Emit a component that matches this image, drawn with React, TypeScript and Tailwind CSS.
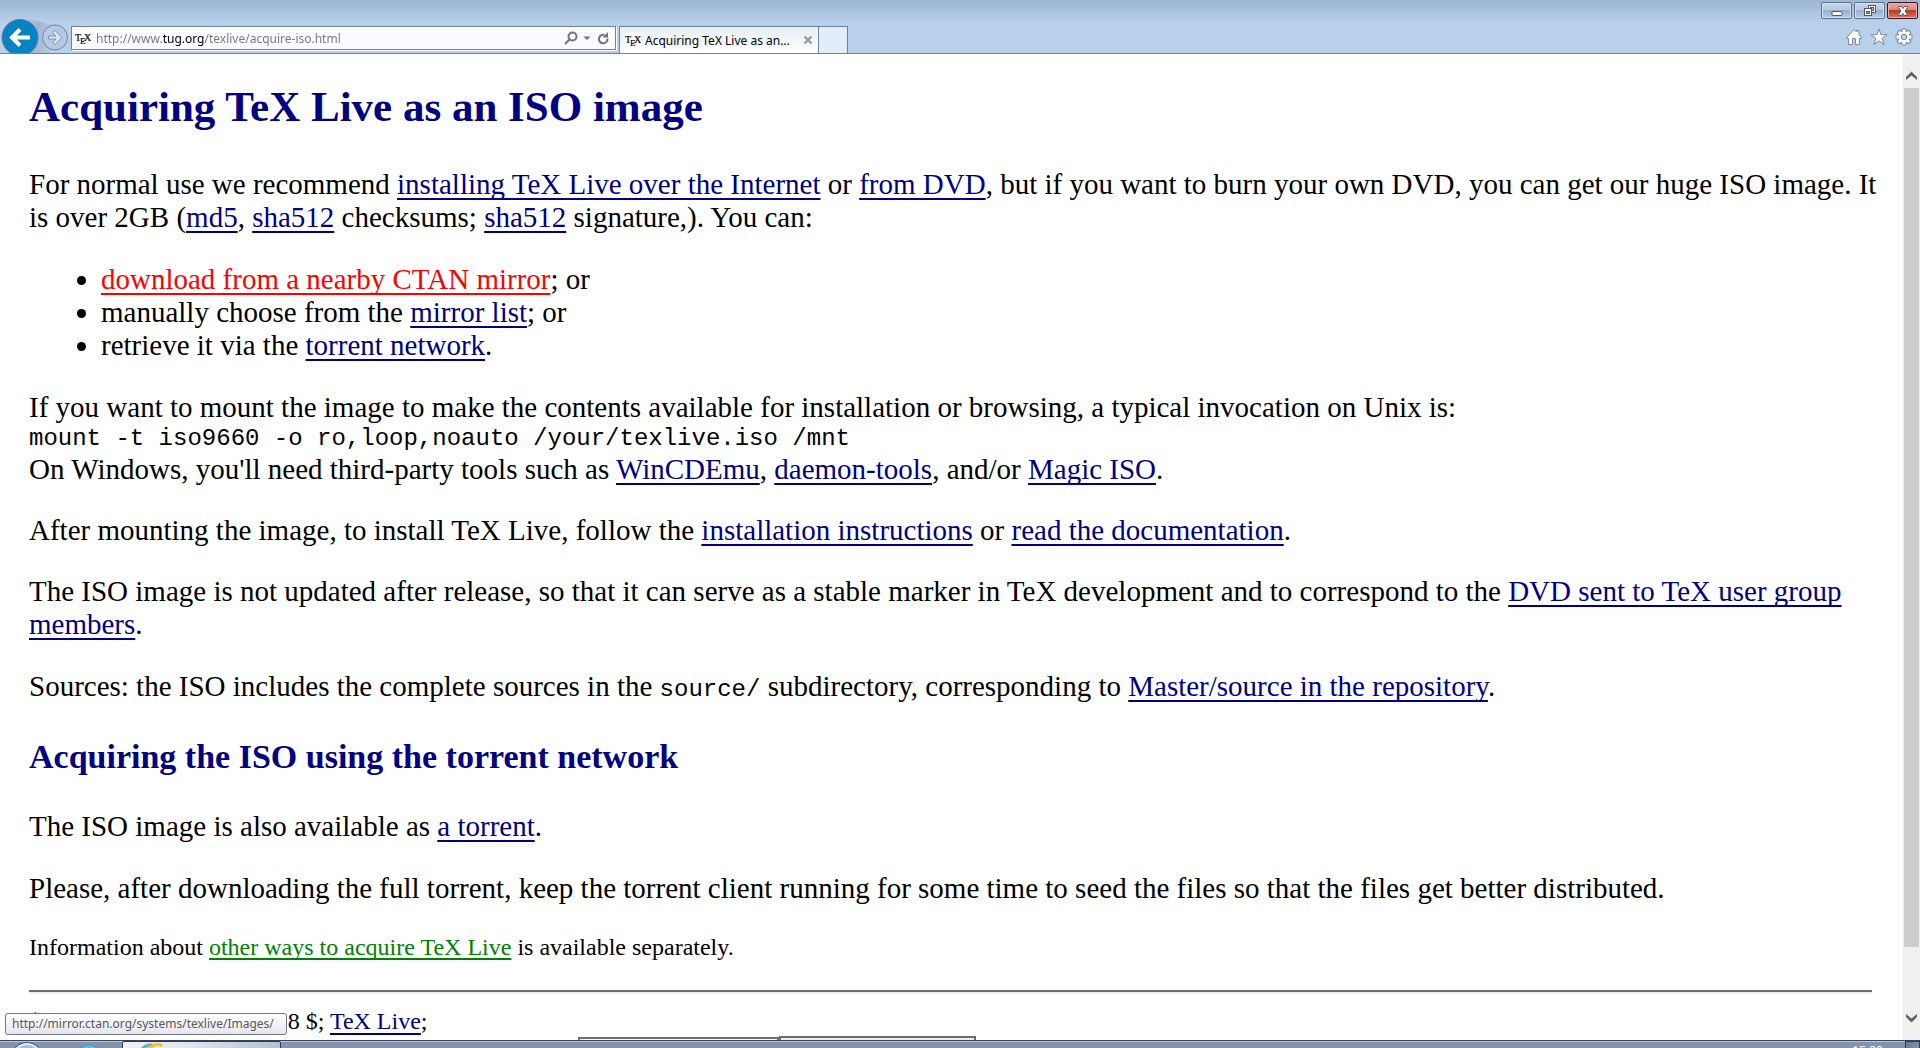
import type { ReactNode } from "react";

const link = "text-[#000080] underline decoration-2 underline-offset-[4px] [text-decoration-skip-ink:none]";

function Link({ href, children }: { href: string; children: ReactNode }) {
  return <a href={href} className={link}>{children}</a>;
}

function TexIcon() {
  return (
    <svg width="16" height="16" viewBox="0 0 16 16" className="shrink-0 bg-white" aria-hidden="true">
      <g fontFamily="Liberation Serif, serif" fontSize="10" fill="#000" stroke="#000" strokeWidth="0.2">
        <text x="0" y="11">T</text>
        <text x="5" y="14" fontSize="9">E</text>
        <text x="9" y="11">X</text>
      </g>
    </svg>
  );
}

function NavButtons() {
  return (
    <div className="flex h-[34px] w-[71px] shrink-0 gap-[3px] overflow-hidden bg-[linear-gradient(100deg,transparent_30%,#9fb4cf_50%,#b9d0ea_75%)] pl-[1px] [clip-path:polygon(0_0,30px_0,48px_5px,71px_5px,71px_100%,0_100%)]">
      <button type="button" aria-label="Back" className="h-[38px] w-[38px] shrink-0">
        <svg width="38" height="38" viewBox="0 0 38 38">
          <circle cx="19" cy="18.5" r="18" fill="#0284c5" stroke="#68788c" />
          <path d="M10 18.5H29M19 10.5L11 18.5L19 26.500" fill="none" stroke="#fff" strokeWidth="4" />
        </svg>
      </button>
      <button type="button" aria-label="Forward" className="h-[38px] w-[26px] shrink-0">
        <svg width="26" height="38" viewBox="0 0 26 38">
          <circle cx="13" cy="18.500" r="12.500" fill="#b4cae4" stroke="#71839a" />
          <path d="M6.500 17H14L10.500 13.500L13 11.500L20 18.500L13 25.500L10.500 23.500L14 20H6.500Z" fill="#d9e5f3" stroke="#8092a8" />
        </svg>
      </button>
    </div>
  );
}

function CaptionButtons() {
  const plain = "grid h-[17px] w-[31px] place-items-center rounded-[2px] border border-[#5d7088] bg-[linear-gradient(#c3d5e9_0%,#b5cae1_48%,#96b0cb_50%,#b5cde6_100%)] shadow-[inset_0_0_0_1px_#d2e1f1]";
  return (
    <div className="flex gap-[2px]">
      <button type="button" aria-label="Minimize" className={plain}>
        <svg width="12" height="12" viewBox="0 0 12 12"><rect x="1" y="6.500" width="10" height="4" rx="0.500" fill="#fff" stroke="#535666" /></svg>
      </button>
      <button type="button" aria-label="Restore" className={plain}>
        <svg width="13" height="12" viewBox="0 0 13 12">
          <g fill="none" stroke="#535666">
            <rect x="5.500" y="0.500" width="7" height="7" fill="#fff" /><rect x="7.500" y="2.500" width="3" height="3" fill="#a9bfd8" />
            <rect x="1.500" y="3.500" width="7" height="7" fill="#fff" /><rect x="3.500" y="6.500" width="3" height="2" fill="#a9bfd8" />
          </g>
        </svg>
      </button>
      <button type="button" aria-label="Close" className="grid h-[17px] w-[31px] place-items-center rounded-[2px] border border-[#43121c] bg-[linear-gradient(#e8a99d_0%,#d98a7b_46%,#b83a22_50%,#d57a66_100%)] shadow-[inset_0_0_0_1px_#e9b1a6]">
        <svg width="12" height="10" viewBox="0 0 12 10"><path d="M1.500 0.500H4.500L6 2.500L7.500 0.500H10.500V1.500L8 5L10.500 8.500V9.500H7.500L6 7.500L4.500 9.500H1.500V8.500L4 5L1.500 1.500Z" fill="#fff" stroke="#535666" /></svg>
      </button>
    </div>
  );
}

function ToolIcons() {
  const teeth = [0, 45, 90, 135, 180, 225, 270, 315];
  return (
    <div className="flex gap-[7px] pr-[5px]">
      <button type="button" aria-label="Home">
        <svg width="18" height="18" viewBox="0 0 18 18"><path d="M1.500 9.500L9 1.500L11.500 4V2.500H14V6.500L16.500 9.500V10.500H14.500V16.500H10.500V10.500H7.500V16.500H3.500V10.500H1.500Z" fill="#fff" stroke="#7d8896" /></svg>
      </button>
      <button type="button" aria-label="Favorites">
        <svg width="18" height="18" viewBox="0 0 18 18"><path d="M9 1L11 6.700H17L12.200 10.300L14 16.500L9 12.800L4 16.500L5.800 10.300L1 6.700H7Z" fill="#fff" stroke="#7d8896" /></svg>
      </button>
      <button type="button" aria-label="Tools">
        <svg width="18" height="18" viewBox="0 0 18 18">
          <g fill="#7d8896">{teeth.map((a) => <rect key={a} x="6.500" y="0.500" width="5" height="5" rx="1" transform={`rotate(${a} 9 9)`} />)}<circle cx="9" cy="9" r="6.500" /></g>
          <g fill="#fff">{teeth.map((a) => <rect key={a} x="7.500" y="1.500" width="3" height="5" transform={`rotate(${a} 9 9)`} />)}<circle cx="9" cy="9" r="5.500" /></g>
          <circle cx="9" cy="9" r="2.800" fill="#b9d0ea" stroke="#7d8896" />
        </svg>
      </button>
    </div>
  );
}

function BrowserBar() {
  return (
    <header className="flex h-[54px] shrink-0 items-end justify-between border-b border-[#6f829b] bg-[linear-gradient(#9bb6d2_0px,#b9d0ea_22px)] font-['Noto_Sans','Noto_Sans_CJK_SC',sans-serif] text-[12px]">
      <div className="flex items-end">
        <NavButtons />
        <div className="mb-[3px] flex h-[24px] w-[545px] items-center border border-[#6f829b] bg-[#f9fbff] pr-[5px] pl-[3px] shadow-[1px_1px_0_#fff]">
          <TexIcon />
          <input
            type="text"
            aria-label="Address"
            defaultValue="http://www.tug.org/texlive/acquire-iso.html"
            className="ml-[5px] h-[22px] min-w-0 flex-1 bg-[linear-gradient(90deg,#777_66px,#000_66px,#000_109px,#777_109px)] bg-clip-text pt-[1px] text-transparent outline-none"
          />
          <button type="button" aria-label="Search">
            <svg width="14" height="14" viewBox="0 0 14 14" fill="none" stroke="#737373" strokeWidth="2"><circle cx="8.500" cy="5.500" r="4" /><path d="M5.500 8.500L1 13" /></svg>
          </button>
          <button type="button" aria-label="Show address bar suggestions" className="ml-[5px]">
            <svg width="8" height="14" viewBox="0 0 8 14"><path d="M0.500 5.500H7.500L4 9Z" fill="#737373" /></svg>
          </button>
          <button type="button" aria-label="Refresh" className="ml-[6px]">
            <svg width="13" height="14" viewBox="0 0 13 14"><path d="M10.500 7.500A4.300 4.300 0 1 1 7.500 3.900" fill="none" stroke="#737373" strokeWidth="2" /><path d="M11 1V6.500H5.500Z" fill="#737373" /></svg>
          </button>
        </div>
        <div className="ml-[3px] flex h-[27px] w-[200px] items-center border border-b-0 border-[#6f829b] bg-[linear-gradient(#e6eef7,#fff)] pr-[5px] pl-[5px]">
          <TexIcon />
          <span className="ml-[4px] flex-1 pt-[2px] whitespace-nowrap">Acquiring TeX Live as an...</span>
          <button type="button" aria-label="Close tab">
            <svg width="10" height="10" viewBox="0 0 10 10"><path d="M1.500 1.500L8.500 8.500M8.500 1.500L1.500 8.500" stroke="#999" strokeWidth="2.400" /></svg>
          </button>
        </div>
        <button type="button" aria-label="New tab" className="h-[27px] w-[29px] border border-b-0 border-l-0 border-[#6f829b] bg-[#e1edf9]" />
      </div>
      <div className="flex h-full flex-col items-end justify-between pt-[2px] pr-[2px] pb-[7px]">
        <CaptionButtons />
        <ToolIcons />
      </div>
    </header>
  );
}

function Article() {
  return (
    <main className="min-w-0 flex-1 overflow-hidden pt-[28px] pr-[20px] pl-[29px] font-['Liberation_Serif',serif] text-[29px] leading-[33px] text-black">
      <h1 className="text-[43px] leading-[50px] font-bold text-[#000080]">Acquiring TeX Live as an ISO image</h1>
      <p className="mt-[36px]">
        For normal use we recommend <Link href="#internet">installing TeX Live over the Internet</Link> or <Link href="#dvd">from DVD</Link>, but if you want to burn your own DVD, you can get our huge ISO image. It is over 2GB (<Link href="#md5">md5</Link>, <Link href="#sha512">sha512</Link> checksums; <Link href="#signature">sha512</Link> signature,). You can:
      </p>
      <ul className="mt-[29px] list-disc pl-[72px]">
        <li><a href="#ctan" className="text-[#ff0000] underline decoration-2 underline-offset-[4px] [text-decoration-skip-ink:none]">download from a nearby CTAN mirror</a>; or</li>
        <li>manually choose from the <Link href="#mirrors">mirror list</Link>; or</li>
        <li>retrieve it via the <Link href="#torrent-network">torrent network</Link>.</li>
      </ul>
      <p className="mt-[29px]">If you want to mount the image to make the contents available for installation or browsing, a typical invocation on Unix is:</p>
      <code className="block font-['Liberation_Mono',monospace] text-[24px] leading-[29px]">mount -t iso9660 -o ro,loop,noauto /your/texlive.iso /mnt</code>
      <p>On Windows, you'll need third-party tools such as <Link href="#wincdemu">WinCDEmu</Link>, <Link href="#daemon-tools">daemon-tools</Link>, and/or <Link href="#magic-iso">Magic ISO</Link>.</p>
      <p className="mt-[28px]">After mounting the image, to install TeX Live, follow the <Link href="#install">installation instructions</Link> or <Link href="#docs">read the documentation</Link>.</p>
      <p className="mt-[28px]">The ISO image is not updated after release, so that it can serve as a stable marker in TeX development and to correspond to the <Link href="#members">DVD sent to TeX user group members</Link>.</p>
      <p className="mt-[29px]">Sources: the ISO includes the complete sources in the <code className="font-['Liberation_Mono',monospace] text-[24px] leading-[28px]">source/</code> subdirectory, corresponding to <Link href="#repository">Master/source in the repository</Link>.</p>
      <h2 className="mt-[34px] text-[34px] leading-[38px] font-bold text-[#000080]">Acquiring the ISO using the torrent network</h2>
      <p className="mt-[34px]">The ISO image is also available as <Link href="#torrent">a torrent</Link>.</p>
      <p className="mt-[29px]">Please, after downloading the full torrent, keep the torrent client running for some time to seed the files so that the files get better distributed.</p>
      <p className="mt-[28px] text-[24px] leading-[28px]">Information about <a href="#other" className="text-[#008000] underline decoration-2 underline-offset-[3px] [text-decoration-skip-ink:none]">other ways to acquire TeX Live</a> is available separately.</p>
      <hr className="mt-[29px] mr-[11px] h-[4px] border-t-2 border-b-2 border-t-[#6d6d6d] border-b-[#f0f0f0]" />
      <p className="mt-[13px] text-[24px] leading-[28px]">$Date: 2018/04/28 16:24:18 $; <Link href="#texlive">TeX Live</Link>;</p>
      <form className="mt-[1px] flex items-start pl-[549px]">
        <input type="text" aria-label="Search terms" className="mt-[1px] h-[36px] w-[201px] border-2 border-[#6d6d6d] bg-white" />
        <button type="button" aria-label="Search" className="h-[38px] w-[197px] border-2 border-[#6d6d6d] bg-[#efefef]" />
      </form>
    </main>
  );
}

function ScrollBar() {
  return (
    <aside aria-label="Page scrolling" className="flex w-[17px] shrink-0 flex-col items-center bg-[#f0f0f0]">
      <button type="button" aria-label="Scroll up" className="flex h-[34px] shrink-0 items-end pb-[8px]">
        <svg width="11" height="9" viewBox="0 0 11 9"><path d="M0 6L5.500 0.500L11 6V9L5.500 4.500L0 9Z" fill="#606060" /></svg>
      </button>
      <div className="w-[15px] grow-[859] bg-[#cdcdcd]" />
      <div className="grow-[58]" />
      <button type="button" aria-label="Scroll down" className="flex h-[35px] shrink-0 items-start pt-[9px]">
        <svg width="11" height="9" viewBox="0 0 11 9"><path d="M0 3L5.500 8.500L11 3V0L5.500 4.500L0 0Z" fill="#606060" /></svg>
      </button>
    </aside>
  );
}

function TaskBar() {
  return (
    <footer className="flex h-[8px] shrink-0 justify-between overflow-hidden border-t border-[#39445a] bg-[linear-gradient(#b8c8dc_1px,#8294ad_1px)]">
      <div className="flex">
        <button type="button" aria-label="Start" className="ml-[12px] h-[30px] w-[30px]">
          <svg width="30" height="30" viewBox="0 0 30 30"><circle cx="15" cy="17" r="15.500" fill="#9fc0d8" stroke="#1f4a70" /><path d="M4 8Q15 -2 26 8" fill="none" stroke="#d8ebf7" strokeWidth="2" /></svg>
        </button>
        <button type="button" aria-label="Browser shortcut" className="ml-[34px] h-[26px] w-[26px]">
          <svg width="26" height="26" viewBox="0 0 26 26"><circle cx="13" cy="17" r="13" fill="#2494e2" /><path d="M5 9Q13 2 21 9" fill="none" stroke="#5cc4f8" strokeWidth="2" /></svg>
        </button>
        <button type="button" aria-label="Acquiring TeX Live as an ISO image" className="ml-[20px] flex h-[30px] w-[159px] rounded-[2px] border border-[#30394a] bg-[linear-gradient(90deg,#eef2f6,#e4e9ef_35%,#b4c0d0)] pl-[17px]">
          <svg width="24" height="20" viewBox="0 0 24 20"><path d="M2 7Q8 1 14 4" fill="none" stroke="#62add9" strokeWidth="3" /><path d="M6 9Q17 -1 22 4" fill="none" stroke="#f5c518" strokeWidth="3" /></svg>
        </button>
      </div>
      <div className="flex">
        <time className="mt-[2px] mr-[22px] font-['Noto_Sans',sans-serif] text-[12px] leading-[16px] text-white">15:20</time>
        <button type="button" aria-label="Show desktop" className="h-[30px] w-[15px] border border-[#303a4c] bg-[linear-gradient(135deg,#68778f,#aab6c7)]" />
      </div>
    </footer>
  );
}

export default function App() {
  return (
    <div className="relative flex h-screen flex-col overflow-hidden bg-white">
      <BrowserBar />
      <div className="flex min-h-0 flex-1">
        <Article />
        <ScrollBar />
      </div>
      <div role="status" className="absolute bottom-[13px] left-[5px] w-[282px] rounded-[3px] border border-[#767676] bg-[linear-gradient(#fff,#e4e5f0)] px-[6px] font-['Noto_Sans',sans-serif] text-[12px] leading-[20px] text-[#575757]">
        http://mirror.ctan.org/systems/texlive/Images/
      </div>
      <TaskBar />
    </div>
  );
}
